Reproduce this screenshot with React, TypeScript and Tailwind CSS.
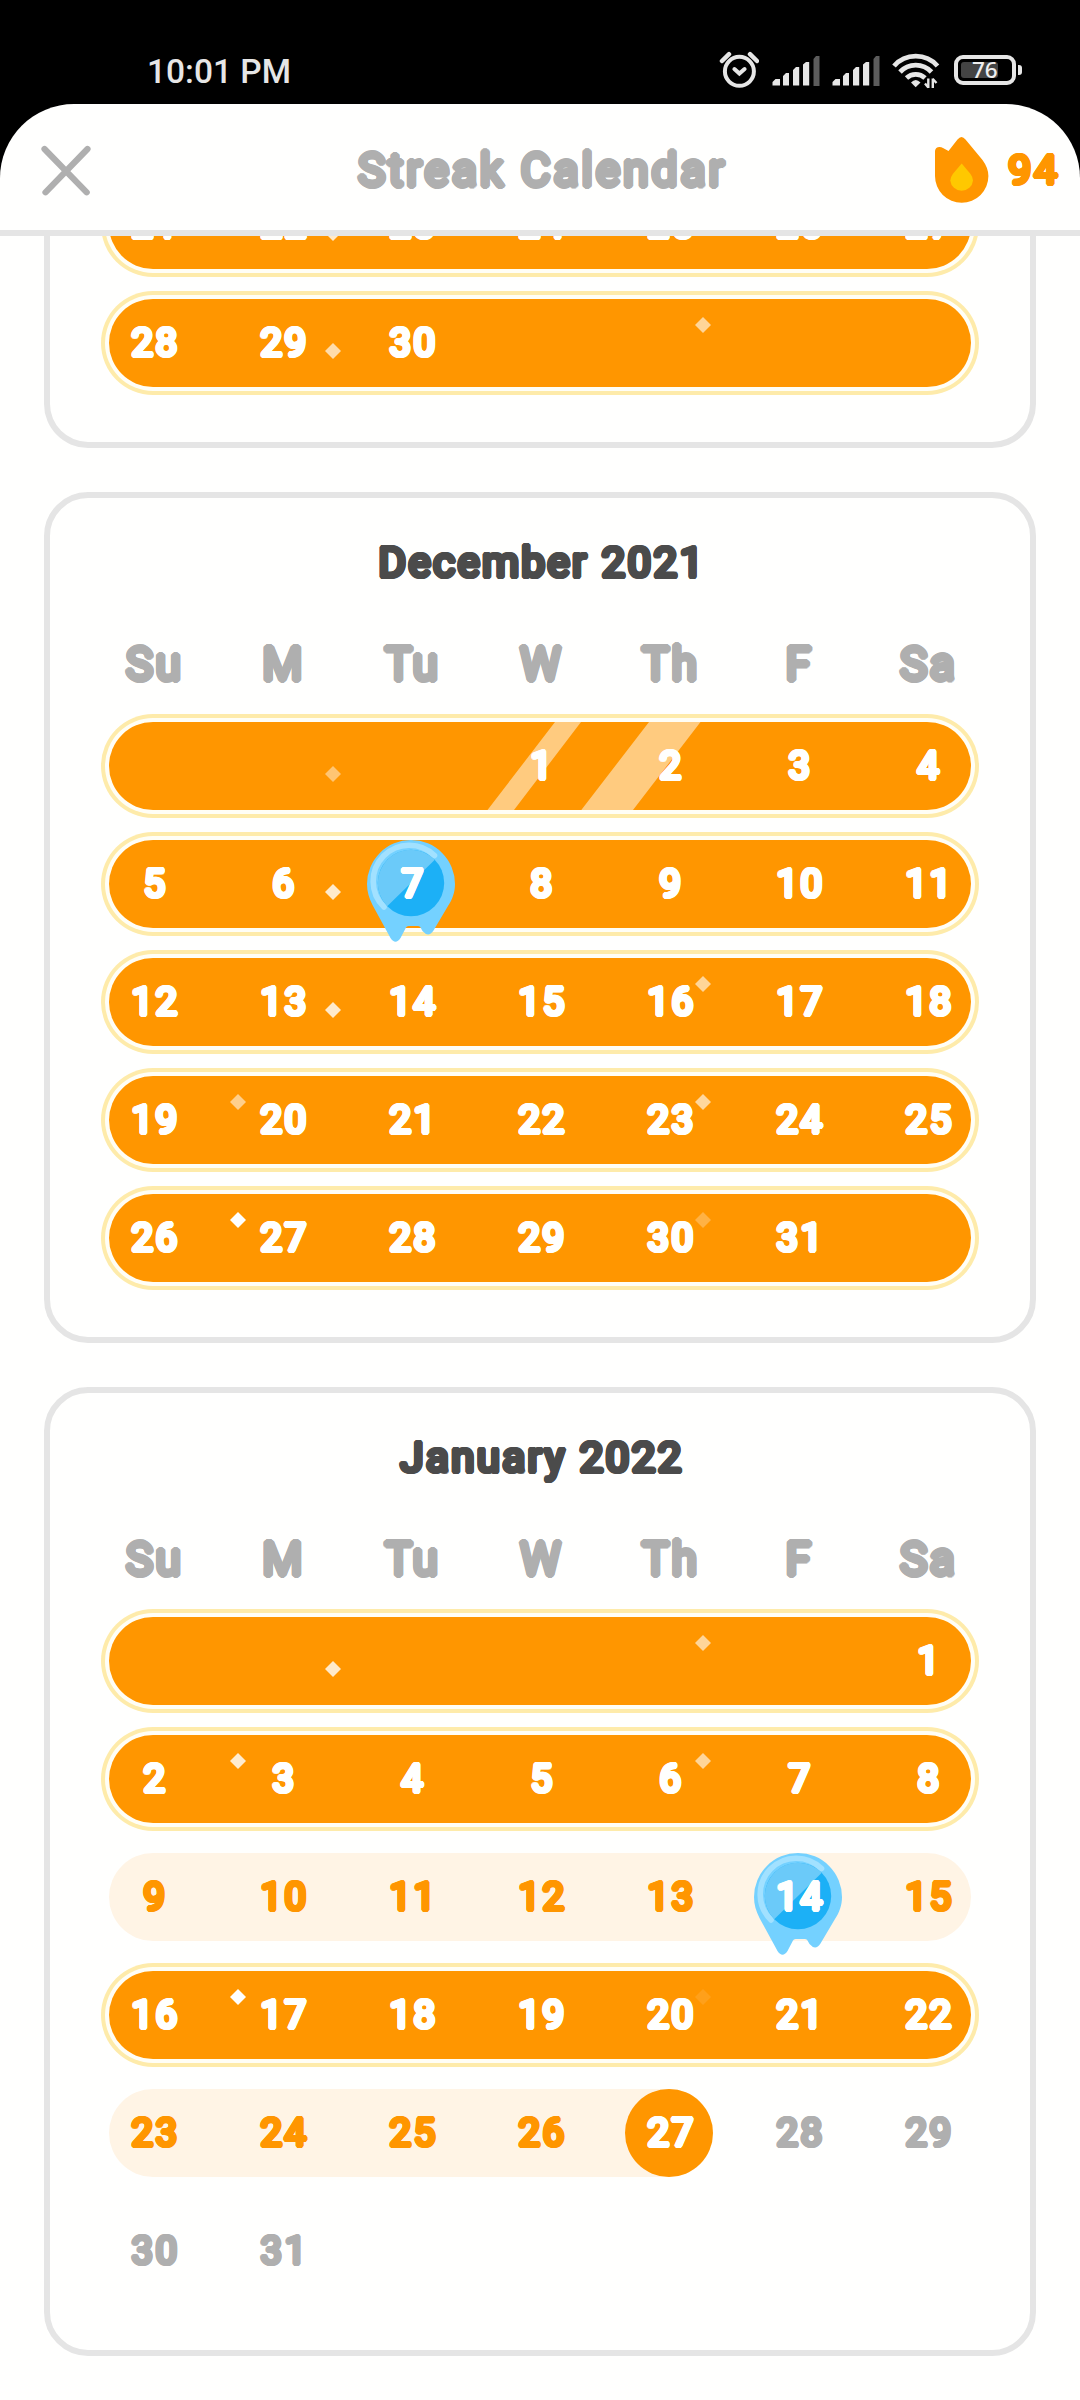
import React from "react";

type Sparkle = { at: "a" | "b" | "c"; o: number };
type Week = {
  days: (number | null)[];
  kind: "perfect" | "streak" | "partial" | "plain";
  sparkles?: Sparkle[];
  pin?: number;
  today?: number;
  shine?: boolean;
};

// Thickens the glyph outline evenly so that strokes end in round caps.
const round =
  "font-['Roboto',sans-serif] font-normal leading-none whitespace-nowrap [text-shadow:.056em_0_currentColor,.048em_.028em_currentColor,.028em_.048em_currentColor,0_.056em_currentColor,-.028em_.048em_currentColor,-.048em_.028em_currentColor,-.056em_0_currentColor,-.048em_-.028em_currentColor,-.028em_-.048em_currentColor,0_-.056em_currentColor,.028em_-.048em_currentColor,.048em_-.028em_currentColor]";

const sparklePos = {
  a: "left-[216px] top-[44px]",
  b: "left-[586px] top-[18px]",
  c: "left-[121px] top-[18px]",
};

const weekdays = ["Su", "M", "Tu", "W", "Th", "F", "Sa"];

const november: Week[] = [
  { days: [21, 22, 23, 24, 25, 26, 27], kind: "perfect", sparkles: [{ at: "a", o: 0.8 }] },
  { days: [28, 29, 30, null, null, null, null], kind: "perfect", sparkles: [{ at: "a", o: 0.67 }, { at: "b", o: 0.6 }] },
];
const december: Week[] = [
  { days: [null, null, null, 1, 2, 3, 4], kind: "perfect", shine: true, sparkles: [{ at: "a", o: 0.45 }] },
  { days: [5, 6, 7, 8, 9, 10, 11], kind: "perfect", pin: 7, sparkles: [{ at: "a", o: 0.8 }] },
  { days: [12, 13, 14, 15, 16, 17, 18], kind: "perfect", sparkles: [{ at: "a", o: 0.8 }, { at: "b", o: 0.6 }] },
  { days: [19, 20, 21, 22, 23, 24, 25], kind: "perfect", sparkles: [{ at: "c", o: 0.55 }, { at: "b", o: 0.62 }] },
  { days: [26, 27, 28, 29, 30, 31, null], kind: "perfect", sparkles: [{ at: "c", o: 1 }, { at: "b", o: 0.27 }] },
];
const january: Week[] = [
  { days: [null, null, null, null, null, null, 1], kind: "perfect", sparkles: [{ at: "a", o: 0.8 }, { at: "b", o: 0.6 }] },
  { days: [2, 3, 4, 5, 6, 7, 8], kind: "perfect", sparkles: [{ at: "c", o: 0.82 }, { at: "b", o: 0.6 }] },
  { days: [9, 10, 11, 12, 13, 14, 15], kind: "streak", pin: 14 },
  { days: [16, 17, 18, 19, 20, 21, 22], kind: "perfect", sparkles: [{ at: "c", o: 1 }, { at: "b", o: 0.1 }] },
  { days: [23, 24, 25, 26, 27, 28, 29], kind: "partial", today: 27 },
  { days: [30, 31, null, null, null, null, null], kind: "plain" },
];

function Pin() {
  return (
    <svg className="absolute left-0 top-0" width="88" height="103" viewBox="0 0 88 103">
      <path
        d="M44 0A44 44 0 0 1 88 44C88 52 85.500 59.500 81 66L66.500 90.500Q61.500 98 55.500 91L53.500 87.500Q53 86 51 86H41.500Q39.700 86 39 87.500L33.500 98Q28.500 105.500 23.500 98L5.500 65C2 58 0 51.500 0 44A44 44 0 0 1 44 0Z"
        fill="#74d1ff"
      />
      <circle cx="44" cy="43" r="33.200" fill="#1cb0f6" />
      <path d="M20.200 66.200A33.200 33.200 0 1 1 67.800 19.800Z" fill="#6bcaf9" />
      <path d="M17 67A36 36 0 0 1 67.500 15.500" fill="none" stroke="#a2e1ff" strokeWidth="5.600" strokeLinecap="round" />
    </svg>
  );
}

function WeekRow({ week }: { week: Week }) {
  const { kind } = week;
  return (
    <div
      className={
        "relative flex h-[88px] shrink-0 justify-between rounded-full " +
        (kind === "perfect"
          ? "bg-[#ff9600] shadow-[0_0_0_4px_#fffef6,0_0_0_8px_#feebaa]"
          : kind === "streak"
            ? "bg-[#fff4e5]"
            : "")
      }
    >
      {kind === "partial" && <div className="absolute left-0 top-0 h-full w-[604px] rounded-full bg-[#fff4e5]" />}
      {week.shine && (
        <svg className="absolute left-0 top-0" width="862" height="88" viewBox="0 0 862 88">
          <path d="M446 0H472L405 88H378.500ZM540 0H591.500L524 88H472.300Z" fill="#ffcb7f" />
        </svg>
      )}
      {week.sparkles?.map((s) => (
        <svg key={s.at} className={"absolute " + sparklePos[s.at]} width="16" height="16" viewBox="0 0 16 16">
          <path d="M8 0L16 8L8 16L0 8Z" fill="#fffffe" fillOpacity={s.o} />
        </svg>
      ))}
      {week.days.map((d, i) => {
        const white = kind === "perfect" || d === week.pin || d === week.today;
        const orange = kind === "streak" || (kind === "partial" && d !== null && week.today !== undefined && d < week.today);
        return (
          <div
            key={i}
            className={
              "relative flex size-[88px] items-center justify-center rounded-full " +
              (d !== null && d === week.today ? "bg-[#ff9600] " : "") +
              (white ? "text-[#fffffe]" : orange ? "text-[#ff9600]" : "text-[#afafaf]")
            }
          >
            {d !== null && d === week.pin && <Pin />}
            {d !== null && <span className={round + " relative pl-[5px] text-[38.5px] tracking-[2.4px]"}>{d}</span>}
          </div>
        );
      })}
    </div>
  );
}

function MonthCard({ title, weeks }: { title: string; weeks: Week[] }) {
  return (
    <section className="flex flex-col rounded-[44px] border-[6px] border-[#e5e5e5] px-[59px] pb-[55px]">
      <h2 className={round + " mt-[38px] flex h-[54px] items-center justify-center pl-[4px] text-[42px] tracking-[2.4px] text-[#4b4b4b]"}>
        {title}
      </h2>
      <div className="mt-[42px] flex h-[64px] items-center justify-between">
        {weekdays.map((w) => (
          <div key={w} className={round + " flex w-[88px] justify-center pl-[3px] text-[46px] tracking-[2.4px] text-[#afafaf]"}>
            {w}
          </div>
        ))}
      </div>
      <div className="mt-[26px] flex flex-col gap-[30px]">
        {weeks.map((w, i) => (
          <WeekRow key={i} week={w} />
        ))}
      </div>
    </section>
  );
}

function Signal() {
  return (
    <svg width="49" height="34" viewBox="0 0 49 34">
      <path
        d="M0.500 32.500V29L3.500 26H8V32.500ZM11 32.500V23L14 20H17V32.500ZM21 32.500V17L24 14H27.200V32.500ZM31 32.500V11.500L34 9H37.200V32.500Z"
        fill="#e6e6e6"
      />
      <path d="M41.500 33V6L44 3H47.500V33Z" fill="#5c5c5c" />
    </svg>
  );
}

function StatusBar() {
  return (
    <div className="flex h-[104px] shrink-0 justify-between bg-black pl-[147px] pr-[58px]">
      <div className="mt-[52px] font-['Roboto',sans-serif] text-[33.500px] font-medium leading-[40px] text-[#e6e6e6]">10:01 PM</div>
      <div className="flex">
        <svg className="mt-[50px]" width="40" height="40" viewBox="719 50 40 40" fill="none" stroke="#e6e6e6" strokeWidth="4">
          <circle cx="739.400" cy="71.300" r="14.500" />
          <path d="M722 61L729 54.200M757 61L750 54.200" strokeWidth="4.500" strokeLinecap="round" />
          <path d="M734.400 69L739.400 73.500L744.600 69" strokeLinecap="round" />
        </svg>
        <div className="ml-[13px] mt-[53px]"><Signal /></div>
        <div className="ml-[11px] mt-[53px]"><Signal /></div>
        <svg className="ml-[10px] mt-[50px]" width="49" height="40" viewBox="891 50 49 40" fill="none" stroke="#e6e6e6" strokeWidth="4.800">
          <path d="M894 66A29 29 0 0 1 937.500 66" />
          <path d="M900 72A21.500 21.500 0 0 1 931.500 72" />
          <path d="M906.500 78A13.500 13.500 0 0 1 925 78" />
          <path d="M911 82.500Q915.700 77.500 920.500 82.500L915.700 87.200Z" fill="#e6e6e6" stroke="none" />
          <path d="M928.300 78.500V88M932.800 88V78.500" strokeWidth="2.400" />
          <path d="M925 83.500L928.300 87.500M936.500 83L932.800 79" strokeWidth="2.400" />
        </svg>
        <div className="ml-[14px] mt-[55px] flex items-center gap-[2px] self-start">
          <div className="relative h-[30px] w-[62px] rounded-[9px] border-[4px] border-[#e6e6e6]">
            <div className="absolute left-[3px] top-[3px] h-[16px] w-[37px] rounded-[3px] bg-[#444444]" />
            <div className="absolute left-[14px] top-0 font-['Noto_Sans',sans-serif] text-[22.500px] font-medium leading-[22px] text-[#efefef]">76</div>
          </div>
          <div className="h-[10px] w-[4px] rounded-r-[3px] bg-[#e6e6e6]" />
        </div>
      </div>
    </div>
  );
}

function Header() {
  return (
    <div className="relative h-[132px] shrink-0 bg-black">
      <header className="relative flex h-full items-start justify-between rounded-t-[74px] bg-[#fffffe] pl-[40px] pr-[20px]">
        <svg className="mt-[40px]" width="52" height="54" viewBox="40 144 52 54" stroke="#afafaf" strokeWidth="6.200" strokeLinecap="round">
          <path d="M44.500 149L86.700 192.300M87.500 149L45.500 192.300" />
        </svg>
        <h1 className={round + " absolute left-0 top-[43px] w-full pl-[5px] text-center text-[46px] tracking-[3px] text-[#afafaf]"}>
          Streak Calendar
        </h1>
        <div className="flex">
          <svg className="mt-[30px]" width="56" height="70" viewBox="934 134 56 70">
            <path
              d="M957.500 139.500Q961.500 134.500 965.500 139.500L982.500 160Q988.400 168 988.400 176A26.700 26.700 0 0 1 935 176V151Q935.500 147 939.500 147Q941.500 147 943 148L948.500 151Z"
              fill="#ff9600"
            />
            <path d="M961.700 163.500L970.500 174Q973 177.500 973 180.500A11.400 11.400 0 0 1 950.300 180.500Q950.300 177.500 952.800 174Z" fill="#ffc800" />
          </svg>
          <span className={round + " ml-[18px] mt-[46px] text-[41px] tracking-[2.800px] text-[#ff9600]"}>94</span>
        </div>
      </header>
      <div className="absolute bottom-0 left-0 h-[6px] w-full bg-[#e5e5e5]" />
    </div>
  );
}

export default function App() {
  return (
    <div className="flex h-[2400px] w-[1080px] flex-col overflow-hidden bg-[#fffffe]">
      <StatusBar />
      <Header />
      <main className="flex-1 overflow-hidden px-[44px]">
        <section className="mt-[-55px] flex flex-col gap-[30px] rounded-b-[44px] border-[6px] border-t-0 border-[#e5e5e5] px-[59px] pb-[55px]">
          {november.map((w, i) => (
            <WeekRow key={i} week={w} />
          ))}
        </section>
        <div className="mt-[44px] flex flex-col gap-[44px]">
          <MonthCard title="December 2021" weeks={december} />
          <MonthCard title="January 2022" weeks={january} />
        </div>
      </main>
    </div>
  );
}
